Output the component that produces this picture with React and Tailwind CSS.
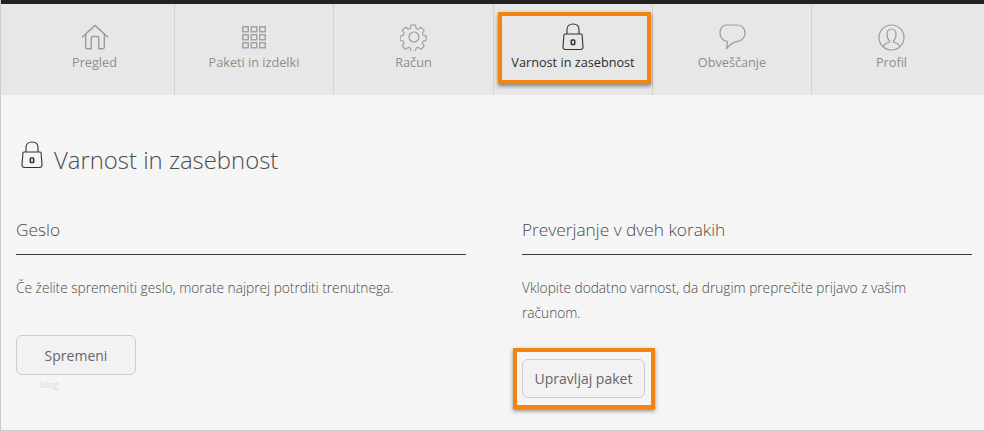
const font = { sans: 'font-["Open_Sans","Noto_Sans",sans-serif]' };

function HomeIcon() {
  return (
    <svg width="28" height="27" viewBox="0 0 30 28" fill="none" stroke="#9b9b9b" strokeWidth="1.500" strokeLinejoin="round" strokeLinecap="round">
      <path d="M1.500 13.500 15 1l13.500 12.500" />
      <path d="M5 11v13.500c0 1 .5 1.500 1.500 1.500H11V14.500c0-1 .5-1.500 1.500-1.500h5c1 0 1.500.5 1.500 1.500V26h4.500c1 0 1.500-.5 1.500-1.500V11" />
    </svg>
  );
}

function GridIcon() {
  const cells = [];
  for (let r = 0; r < 3; r++) {
    for (let c = 0; c < 3; c++) {
      cells.push(<rect key={`${r}-${c}`} x={0.75 + c * 8.5} y={0.75 + r * 8} width="5.500" height="5" />);
    }
  }
  return (
    <svg width="24" height="23" viewBox="0 0 24 23" fill="none" stroke="#a3a3a3" strokeWidth="1.500">
      {cells}
    </svg>
  );
}

function GearIcon() {
  return (
    <svg width="28" height="28" viewBox="0 0 28 28" fill="none" stroke="#9b9b9b" strokeWidth="1.200" strokeLinejoin="round">
      <circle cx="14" cy="14" r="5" />
      <path d="M11.500 1.500h5l.7 3.700 2.300 1 3.200-2.100 3.500 3.500-2.100 3.200 1 2.300 3.400.7v5l-3.400.7-1 2.300 2.100 3.200-3.500 3.500-3.200-2.100-2.300 1-.7 3.400h-5l-.7-3.400-2.300-1-3.200 2.100-3.500-3.500 2.100-3.200-1-2.300-3.400-.7v-5l3.400-.7 1-2.300-2.100-3.200 3.500-3.500 3.200 2.100 2.300-1z" transform="translate(.6 .6) scale(.9)" />
    </svg>
  );
}

function LockIcon({ color = '#333' }) {
  return (
    <svg width="22" height="28" viewBox="0 0 22 28" fill="none" stroke={color} strokeWidth="1.100" strokeLinejoin="round">
      <path d="M5 11V6.500C5 3 7.500 1 11 1s6 2 6 5.500V11" />
      <path d="M3 11h16c.7 0 1.100.4 1.100 1l.9 12c0 1.500-1 2.500-2.500 2.500h-15C2 26.500 1 25.500 1 24l.9-12c0-.6.4-1 1.100-1z" />
      <rect x="9.300" y="17" width="3.400" height="4.500" rx=".8" strokeWidth="1.500" />
    </svg>
  );
}

function BubbleIcon() {
  return (
    <svg width="27" height="26" viewBox="0 0 27 26" fill="none" stroke="#9b9b9b" strokeWidth="1.200" strokeLinejoin="round">
      <path d="M7.500 1h11C23 1 26 4.500 26 9s-3 8-7.500 8.300c-3 .2-5 1.200-7 3.200L7.500 24.500l1-7C4 17 1 13.500 1 9s2.500-8 6.500-8z" />
    </svg>
  );
}

function ProfileIcon() {
  return (
    <svg width="27" height="27" viewBox="0 0 27 27" fill="none" stroke="#9b9b9b" strokeWidth="1.200" strokeLinejoin="round">
      <circle cx="13.500" cy="13.500" r="12.500" />
      <path d="M5.500 23c.3-2 1-3 2.800-3.700l2.700-1c.5-.3.700-.8.700-1.400-1.700-1.300-2.700-3.500-2.700-6.400 0-3.300 1.700-5.500 4.500-5.500s4.500 2.200 4.500 5.500c0 2.900-1 5.100-2.700 6.400 0 .6.200 1.100.7 1.400l2.700 1c1.800.7 2.500 1.700 2.800 3.700" />
    </svg>
  );
}

const tabs = [
  { label: 'Pregled', icon: <HomeIcon />, w: 'w-[159px]' },
  { label: 'Paketi in izdelki', icon: <GridIcon />, w: 'w-[159px]' },
  { label: 'Račun', icon: <GearIcon />, w: 'w-[160px]' },
  { label: 'Varnost in zasebnost', icon: <LockIcon />, w: 'w-[159px]', active: true },
  { label: 'Obveščanje', icon: <BubbleIcon />, w: 'w-[159px]' },
  { label: 'Profil', icon: <ProfileIcon />, w: 'w-[160px]' },
];

function Tab({ tab, first }) {
  return (
    <div className={`${tab.w} h-full flex flex-col items-center pt-[19px] ${first ? '' : 'border-l border-[#d2d2d2]'}`}>
      <div className="h-[28px] flex items-center justify-center">{tab.icon}</div>
      <div className={`mt-[1px] text-[12.700px] leading-[20px] ${tab.active ? 'text-[#2c2c2c]' : 'text-[#8e8e8e]'}`}>
        {tab.label}
      </div>
    </div>
  );
}

export default function App() {
  return (
    <div className={`relative w-[984px] h-[431px] overflow-hidden bg-[#f5f5f5] border-l border-b border-[#cccccc] ${font.sans}`}>
      <div className="h-[4px] bg-[#222222] -ml-px" />
      <nav className="h-[91px] bg-[#e7e7e7] flex pl-[14px]">
        {tabs.map((t, i) => <Tab key={t.label} tab={t} first={i === 0} />)}
      </nav>

      {/* orange callouts from the screenshot */}
      <div className="absolute left-[497px] top-[12px] w-[153px] h-[72px] border-4 border-[#f58310] shadow-[0_2px_4px_rgba(0,0,0,0.45)]" />
      <div className="absolute left-[512px] top-[348px] w-[142px] h-[61px] border-4 border-[#f58310] shadow-[0_2px_4px_rgba(0,0,0,0.45)]" />

      <div className="pl-[15px] pr-[11px]">
        <div className="flex items-center gap-[11px] mt-[42px] pl-[5px] h-[46px]">
          <div className="mb-[10px]"><LockIcon /></div>
          <h1 className="text-[23.900px] leading-[46px] font-light text-[#4b4b4b]">Varnost in zasebnost</h1>
        </div>

        <div className="grid grid-cols-[450px_450px] gap-x-[56px] mt-[32px]">
          <section>
            <h2 className="text-[17.300px] leading-[24px] font-light text-[#4b4b4b] pb-[12px] border-b border-[#3a3a3a] pt-[3px]">Geslo</h2>
            <p className="mt-[20px] text-[13.700px] leading-[25px] font-light text-[#4a4a4a] h-[25px]">Če želite spremeniti geslo, morate najprej potrditi trenutnega.</p>
            <button className="mt-[35px] w-[120px] h-[40px] rounded-[6px] border border-[#cccccc] bg-[#f2f2f2] text-[14px] text-[#666666]">Spremeni</button>
            <div className="pl-[24px] text-[9px] leading-[20px] text-[#d8d8d8]">blog</div>
          </section>
          <section>
            <h2 className="text-[17.300px] leading-[24px] font-light text-[#4b4b4b] pb-[12px] border-b border-[#3a3a3a] pt-[3px]">Preverjanje v dveh korakih</h2>
            <p className="mt-[20px] text-[13.700px] leading-[25px] font-light text-[#4a4a4a] max-w-[420px]">Vklopite dodatno varnost, da drugim preprečite prijavo z vašim računom.</p>
            <button className="mt-[34px] w-[123px] h-[39px] rounded-[6px] border border-[#cccccc] bg-[#f2f2f2] text-[14px] text-[#666666]">Upravljaj paket</button>
          </section>
        </div>
      </div>
    </div>
  );
}
